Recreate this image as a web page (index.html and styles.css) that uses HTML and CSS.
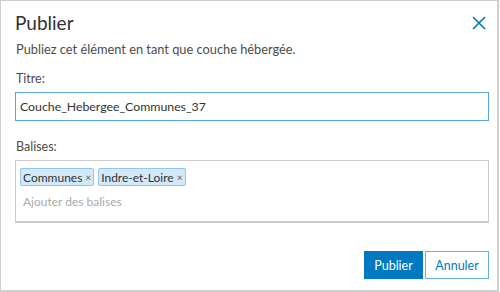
FILE: index.html
```html
<!DOCTYPE html>
<html lang="fr">
<head>
    <meta charset="UTF-8">
    <title>Publier</title>
    <link rel="stylesheet" href="styles.css">
</head>
<body>
    <div class="dialog">
        <div class="dialog-header">
            <h2 class="dialog-title">Publier</h2>
            <button class="close-btn" aria-label="Fermer">
                <svg width="14" height="14" viewBox="0 0 14 14">
                    <path d="M1 1 L13 13 M13 1 L1 13" stroke="#0079c1" stroke-width="1.6" fill="none"/>
                </svg>
            </button>
        </div>

        <p class="intro">Publiez cet élément en tant que couche hébergée.</p>

        <label class="field-label">Titre:</label>
        <input class="title-input" type="text" value="Couche_Hebergee_Communes_37">

        <label class="field-label tags-label">Balises:</label>
        <div class="tags-box">
            <div class="tag-list">
                <span class="tag">Communes <span class="tag-x">×</span></span>
                <span class="tag">Indre-et-Loire <span class="tag-x">×</span></span>
            </div>
            <div class="tag-placeholder">Ajouter des balises</div>
        </div>

        <div class="actions">
            <button class="btn btn-primary">Publier</button>
            <button class="btn btn-clear">Annuler</button>
        </div>
    </div>
</body>
</html>
```

FILE: styles.css
```css
* {
    margin: 0;
    padding: 0;
    box-sizing: border-box;
}

body {
    font-family: 'Lato', 'Noto Sans', sans-serif;
    background: #ffffff;
    color: #4c4c4c;
}

.dialog {
    width: 499px;
    height: 292px;
    border: 1px solid #cfcfcf;
    border-right-width: 2px;
    border-bottom-width: 2px;
    padding: 0 10px 0 14px;
    display: flex;
    flex-direction: column;
}

.dialog-header {
    display: flex;
    justify-content: space-between;
    align-items: center;
    height: 35px;
    padding-top: 8px;
}

.dialog-title {
    font-size: 19px;
    font-weight: 400;
    color: #323232;
}

.close-btn {
    background: none;
    border: none;
    width: 14px;
    height: 14px;
    margin-right: 1px;
    display: flex;
}

.intro {
    font-size: 12.8px;
    margin-top: 5px;
    margin-left: 1px;
    line-height: 16px;
}

.field-label {
    display: block;
    font-size: 12.5px;
    line-height: 16px;
    margin-top: 14px;
    margin-left: 1px;
}

.title-input {
    margin-top: 5px;
    width: 474px;
    height: 29px;
    border: 1.5px solid #5ba4dd;
    padding: 0 4px;
    font-family: inherit;
    font-size: 12.3px;
    color: #323232;
    outline: none;
}

.tags-label {
    margin-top: 18px;
}

.tags-box {
    margin-top: 5px;
    width: 474px;
    height: 63px;
    border: 1px solid #cccccc;
    border-bottom-width: 2px;
    padding: 7px 4px;
}

.tag-list {
    display: flex;
    gap: 4px;
}

.tag {
    display: inline-flex;
    align-items: center;
    height: 18px;
    padding: 0 2px;
    background: #d2e9f9;
    border: 1px solid #96c5e9;
    border-radius: 2px;
    font-size: 12px;
    color: #323232;
}

.tag-x {
    font-size: 10px;
    margin-left: 3px;
    color: #595959;
}

.tag-placeholder {
    margin-top: 8px;
    margin-left: 3px;
    font-size: 12px;
    color: #aaaaaa;
}

.actions {
    display: flex;
    justify-content: flex-end;
    gap: 2px;
    width: 474px;
    margin-top: 28px;
}

.btn {
    height: 28px;
    font-family: inherit;
    font-size: 12.5px;
    border: 1px solid #0079c1;
    cursor: pointer;
}

.btn-primary {
    width: 59px;
    background: #0079c1;
    color: #ffffff;
}

.btn-clear {
    width: 64px;
    background: #ffffff;
    color: #0079c1;
    border-color: #6aaee2;
}
```
